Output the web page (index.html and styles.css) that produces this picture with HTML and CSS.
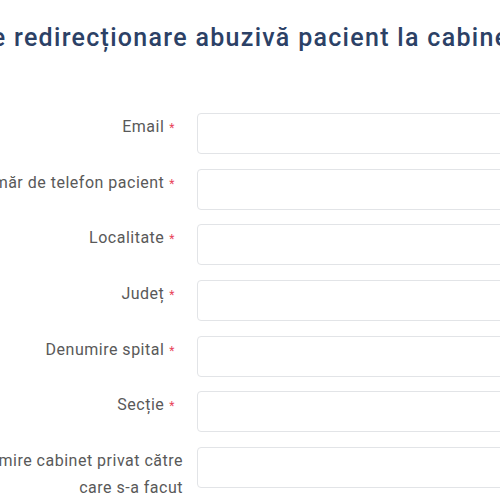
FILE: index.html
```html
<!DOCTYPE html>
<html lang="ro">

<head>
  <meta charset="UTF-8" />
  <meta name="viewport" content="width=device-width, initial-scale=1" />
  <title>Formular redirecționare abuzivă</title>
  <link rel="stylesheet" href="styles.css">
</head>

<body>
  <div class="page">
    <h1 class="title">Formular de raportare redirecționare abuzivă pacient la cabinet privat</h1>

    <form class="report-form">
      <label class="field-label" for="email">Email<span class="req">*</span></label>
      <input class="field-input" id="email" type="email">

      <label class="field-label" for="telefon">Număr de telefon pacient<span class="req">*</span></label>
      <input class="field-input" id="telefon" type="text">

      <label class="field-label" for="localitate">Localitate<span class="req">*</span></label>
      <input class="field-input" id="localitate" type="text">

      <label class="field-label" for="judet">Județ<span class="req">*</span></label>
      <input class="field-input" id="judet" type="text">

      <label class="field-label" for="spital">Denumire spital<span class="req">*</span></label>
      <input class="field-input" id="spital" type="text">

      <label class="field-label" for="sectie">Secție<span class="req">*</span></label>
      <input class="field-input" id="sectie" type="text">

      <label class="field-label" for="cabinet">Denumire cabinet privat către care s-a facut</label>
      <input class="field-input" id="cabinet" type="text">
    </form>
  </div>
</body>

</html>
```

FILE: styles.css
```css
html,
body {
  margin: 0;
  padding: 0;
  background-color: #fff;
  font-family: Roboto, "Liberation Sans", sans-serif;
  overflow: hidden;
}

.page {
  width: 760px;
}

.title {
  margin: 0 0 61px -265px;
  padding-top: 24px;
  font-size: 25px;
  line-height: 28px;
  font-weight: 500;
  letter-spacing: 1.3px;
  color: #2c4166;
  white-space: nowrap;
}

.report-form {
  display: grid;
  grid-template-columns: 230px 1fr;
  column-gap: 14px;
  row-gap: 14.67px;
  margin-left: -47px;
}

.field-label {
  font-size: 16px;
  line-height: 27px;
  letter-spacing: 0.5px;
  color: #595959;
  text-align: right;
}

.req {
  color: #e8455a;
  font-size: 12px;
  margin-left: 5px;
  margin-right: 8px;
}

.field-input {
  height: 41px;
  box-sizing: border-box;
  border: 1px solid #e2e4e7;
  border-radius: 4px;
  background: #fff;
}
```
